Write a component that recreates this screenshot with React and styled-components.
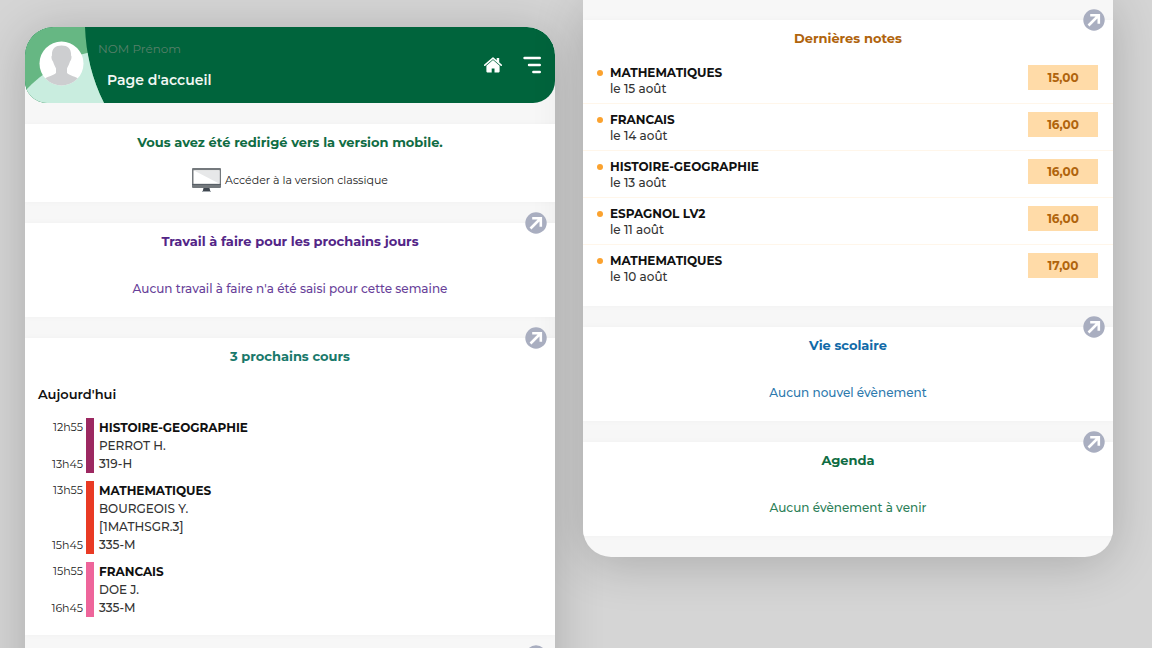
import React from "react"
import styled, { createGlobalStyle } from "styled-components"

const GlobalStyle = createGlobalStyle`
  * {
    box-sizing: border-box;
  }
  body {
    margin: 0;
    background: #d5d5d5;
    color: #111;
    font-family: Montserrat, Inter, "Open Sans", sans-serif;
    font-size: 12px;
    font-weight: 500;
  }
`

const Page = styled.main`
  display: grid;
  grid-template-columns: 1fr 1fr;
  align-items: start;
  gap: 28px;
  height: 100vh;
  padding: 0 39px 0 25px;
  overflow: hidden;
`

const Panel = styled.div`
  display: flex;
  flex-direction: column;
  gap: 21px;
  background: #f7f7f7;
  box-shadow: 0 6px 50px rgba(0, 0, 0, 0.2);
  overflow: hidden;
`

const FirstPanel = styled(Panel)`
  margin-top: 27px;
  border-radius: 28px 28px 0 0;
`

const LastPanel = styled(Panel)`
  padding: 20px 0 21px;
  border-radius: 0 0 28px 28px;
`

const Header = styled.header`
  display: flex;
  height: 76px;
  background: #00643c;
  border-radius: 28px 28px 22px 22px;
  overflow: hidden;
`

const Identity = styled.div`
  display: flex;
  flex-direction: column;
  flex: 1;
  gap: 12px;
  padding-top: 13px;
  margin-left: -6px;
`

const UserName = styled.span`
  font-weight: 400;
  line-height: 18px;
  color: #57806a;
`

const PageTitle = styled.h1`
  margin: 0;
  padding-left: 9px;
  font-size: 14px;
  font-weight: 600;
  line-height: 20px;
  color: #f1f7f3;
`

const Actions = styled.nav`
  display: flex;
  align-items: center;
  gap: 21px;
  padding-right: 14px;
`

const IconButton = styled.button`
  display: flex;
  padding: 0;
  border: 0;
  background: none;
  cursor: pointer;
`

const Card = styled.section`
  position: relative;
  min-height: 78px;
  padding-top: 8px;
  background: #fff;
  box-shadow: 0 0 6px rgba(0, 0, 0, 0.03);
`

const CardTitle = styled.h2`
  margin: 0;
  font-size: 13px;
  font-weight: 700;
  line-height: 20px;
  text-align: center;
  color: ${props => props.$color};
`

const Message = styled.p`
  margin: 0;
  padding: 28px 0 18px;
  line-height: 20px;
  text-align: center;
  color: ${props => props.$color};
`

const OpenLink = styled.a`
  position: absolute;
  top: -11px;
  right: 8px;
  display: flex;
`

const ClassicLink = styled.a`
  display: flex;
  justify-content: center;
  align-items: center;
  gap: 4px;
  padding: 16px 0 10px;
  font-size: 11px;
  font-weight: 400;
  line-height: 16px;
  color: #222;
  text-decoration: none;
`

const Day = styled.h3`
  margin: 0;
  padding: 18px 13px 14px;
  font-size: 13px;
  font-weight: 600;
  line-height: 20px;
`

const Lessons = styled.ul`
  display: flex;
  flex-direction: column;
  gap: 8px;
  margin: 0;
  padding: 0 0 18px;
  list-style: none;
`

const Lesson = styled.li`
  display: grid;
  grid-template-columns: 58px 8px 1fr;
  column-gap: 3px;
`

const Times = styled.div`
  display: flex;
  flex-direction: column;
  justify-content: space-between;
  font-size: 11px;
  font-weight: 400;
  line-height: 18px;
  text-align: right;
  color: #222;
`

const Bar = styled.span`
  background: ${props => props.$color};
`

const Details = styled.div`
  display: flex;
  flex-direction: column;
  padding: 1px 0 0 2px;
  line-height: 18px;
  color: #333;
`

const Subject = styled.strong`
  font-weight: 700;
  color: #111;
`

const Grades = styled.ul`
  margin: 0;
  padding: 9px 0 14px;
  list-style: none;
`

const Grade = styled.li`
  display: flex;
  align-items: flex-start;
  gap: 7px;
  height: 47px;
  padding: 8px 15px 0 14px;
  border-bottom: 1px solid #fff6ea;

  &:last-child {
    border-bottom-color: transparent;
  }
`

const Dot = styled.span`
  width: 6px;
  height: 6px;
  margin-top: 5px;
  border-radius: 50%;
  background: #fba22f;
`

const GradeInfo = styled.div`
  display: flex;
  flex-direction: column;
  flex: 1;
  line-height: 16px;
  color: #333;
`

const Mark = styled.span`
  width: 70px;
  background: #ffdba8;
  color: #b0640d;
  font-weight: 700;
  line-height: 25px;
  text-align: center;
`

const lessons = [
  { start: "12h55", end: "13h45", color: "#9c2861", subject: "HISTOIRE-GEOGRAPHIE", lines: ["PERROT H.", "319-H"] },
  { start: "13h55", end: "15h45", color: "#e93a24", subject: "MATHEMATIQUES", lines: ["BOURGEOIS Y.", "[1MATHSGR.3]", "335-M"] },
  { start: "15h55", end: "16h45", color: "#ee659b", subject: "FRANCAIS", lines: ["DOE J.", "335-M"] },
]

const grades = [
  { subject: "MATHEMATIQUES", date: "le 15 août", mark: "15,00" },
  { subject: "FRANCAIS", date: "le 14 août", mark: "16,00" },
  { subject: "HISTOIRE-GEOGRAPHIE", date: "le 13 août", mark: "16,00" },
  { subject: "ESPAGNOL LV2", date: "le 11 août", mark: "16,00" },
  { subject: "MATHEMATIQUES", date: "le 10 août", mark: "17,00" },
]

const Avatar = () => (
  <svg width="79" height="76" viewBox="0 0 79 76" aria-hidden="true">
    <defs>
      <clipPath id="corner">
        <path d="M0 0H60C61 27 67 52 79 76H0Z" />
      </clipPath>
      <clipPath id="face">
        <circle cx="36.500" cy="36.500" r="22" />
      </clipPath>
    </defs>
    <g clipPath="url(#corner)">
      <rect width="79" height="76" fill="#66b783" />
      <path d="M0 64C18 45 39 31 66 25L79 24V76H0Z" fill="#c9eddf" />
    </g>
    <circle cx="36.500" cy="36.500" r="22" fill="#fff" />
    <g clipPath="url(#face)" fill="#cdced0">
      <path d="M36.500 18.500C43 18.500 46.500 22 46 28.500C47 29 46.500 33 45 34.500C44 38 42.500 40 42 41.500V46C45 49 51 49.500 54 52V60H19V52C22 49.500 28 49 31 46V41.500C30.500 40 29 38 28 34.500C26.500 33 26 29 27 28.500C26.500 22 30 18.500 36.500 18.500Z" />
    </g>
  </svg>
)

const HomeIcon = () => (
  <svg width="18" height="16" viewBox="0 0 18 16" fill="none" aria-hidden="true">
    <path d="M0.800 8.200L9 1.200L17.200 8.200" stroke="#fff" strokeWidth="1.600" strokeLinecap="round" strokeLinejoin="round" />
    <path d="M12.700 1H15.200V6.500L12.700 4.300Z" fill="#fff" />
    <path d="M9 3L15.600 8.700V14.600Q15.600 15.400 14.800 15.400H10.500V11.500H7.700V15.400H3.200Q2.400 15.400 2.400 14.600V8.700Z" fill="#fff" />
  </svg>
)

const MenuIcon = () => (
  <svg width="18" height="18" viewBox="0 0 18 18" stroke="#fff" strokeWidth="2.400" strokeLinecap="round" aria-hidden="true">
    <path d="M1.500 2H16.800M6 9H16.800M10.300 16H16.800" />
  </svg>
)

const ScreenIcon = () => (
  <svg width="29" height="24" viewBox="0 0 29 24" aria-hidden="true">
    <rect width="29" height="20" rx="1" fill="#74797d" />
    <rect x="1.500" y="2.300" width="26" height="13.500" fill="#fff" />
    <path d="M1.500 2.300H27.500V15.800Z" fill="#e7e8e9" />
    <rect y="16" width="29" height="1" fill="#596067" />
    <path d="M11.500 20H17.500L18.500 24H10.500Z" fill="#3f464e" />
    <path d="M10 23H19V24H10Z" fill="#a5abb0" />
  </svg>
)

const Open = ({ label }) => (
  <OpenLink href="#" aria-label={label}>
    <svg width="22" height="22" viewBox="0 0 22 22" fill="none" aria-hidden="true">
      <circle cx="11" cy="11" r="10.700" fill="#a9aec0" />
      <path d="M5.500 16.500L15.500 6.500M7.200 6.300H15.800V14.800" stroke="#fff" strokeWidth="2.600" />
    </svg>
  </OpenLink>
)

const Block = ({ title, color, children }) => (
  <Card>
    <Open label={title} />
    <CardTitle $color={color}>{title}</CardTitle>
    {children}
  </Card>
)

const App = () => (
  <>
    <GlobalStyle />
    <Page>
      <FirstPanel>
        <Header>
          <Avatar />
          <Identity>
            <UserName>NOM Prénom</UserName>
            <PageTitle>Page d'accueil</PageTitle>
          </Identity>
          <Actions>
            <IconButton aria-label="Accueil"><HomeIcon /></IconButton>
            <IconButton aria-label="Menu"><MenuIcon /></IconButton>
          </Actions>
        </Header>
        <Card>
          <CardTitle $color="#0f6c43">Vous avez été redirigé vers la version mobile.</CardTitle>
          <ClassicLink href="#">
            <ScreenIcon />
            Accéder à la version classique
          </ClassicLink>
        </Card>
        <Block title="Travail à faire pour les prochains jours" color="#532587">
          <Message $color="#683f99">Aucun travail à faire n'a été saisi pour cette semaine</Message>
        </Block>
        <Block title="3 prochains cours" color="#18796b">
          <Day>Aujourd'hui</Day>
          <Lessons>
            {lessons.map(lesson => (
              <Lesson key={lesson.start}>
                <Times>
                  <time>{lesson.start}</time>
                  <time>{lesson.end}</time>
                </Times>
                <Bar $color={lesson.color} />
                <Details>
                  <Subject>{lesson.subject}</Subject>
                  {lesson.lines.map(line => <span key={line}>{line}</span>)}
                </Details>
              </Lesson>
            ))}
          </Lessons>
        </Block>
        <Card>
          <Open label="Ouvrir" />
        </Card>
      </FirstPanel>
      <LastPanel>
        <Block title="Dernières notes" color="#b0640d">
          <Grades>
            {grades.map(grade => (
              <Grade key={grade.date}>
                <Dot />
                <GradeInfo>
                  <Subject>{grade.subject}</Subject>
                  <span>{grade.date}</span>
                </GradeInfo>
                <Mark>{grade.mark}</Mark>
              </Grade>
            ))}
          </Grades>
        </Block>
        <Block title="Vie scolaire" color="#116aa8">
          <Message $color="#2d79ad">Aucun nouvel évènement</Message>
        </Block>
        <Block title="Agenda" color="#0f6c43">
          <Message $color="#2c8058">Aucun évènement à venir</Message>
        </Block>
      </LastPanel>
    </Page>
  </>
)

export default App
